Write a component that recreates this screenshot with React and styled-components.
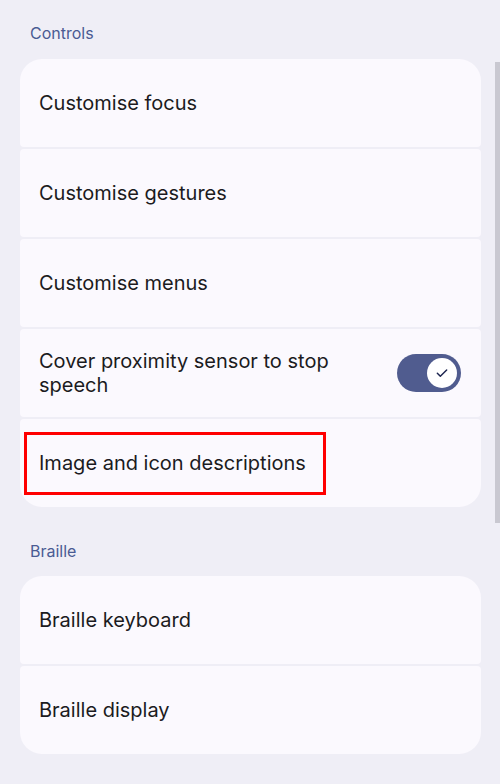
import React from "react";
import styled, { createGlobalStyle } from "styled-components";

const Global = createGlobalStyle`
  html, body { margin: 0; padding: 0; background: #efeef6; }
  body { font-family: "Inter", "Noto Sans", sans-serif; -webkit-font-smoothing: antialiased; }
`;

const Page = styled.div`
  position: relative;
  width: 500px;
  height: 784px;
  overflow: hidden;
  background: #efeef6;
  padding: 0 19px 0 20px;
  box-sizing: border-box;
`;

const SectionTitle = styled.div`
  height: ${(p) => p.$h}px;
  display: flex;
  align-items: flex-end;
  padding: 0 0 ${(p) => p.$pb}px 10px;
  box-sizing: border-box;
  color: #4a5b93;
  font-size: 16px;
  line-height: 20px;
`;

const Group = styled.div`
  display: flex;
  flex-direction: column;
  gap: 2px;
`;

const Row = styled.div`
  position: relative;
  height: 88px;
  background: #fbf9fe;
  border-radius: 4px;
  display: flex;
  align-items: center;
  justify-content: space-between;
  padding: 0 20px 0 19px;
  box-sizing: border-box;
  &:first-child { border-top-left-radius: 22px; border-top-right-radius: 22px; }
  &:last-child { border-bottom-left-radius: 22px; border-bottom-right-radius: 22px; }
`;

const Label = styled.div`
  color: #1b1b21;
  font-size: 20px;
  line-height: 24px;
  max-width: 345px;
`;

const Switch = styled.div`
  width: 64px;
  height: 38px;
  border-radius: 19px;
  background: #505c8f;
  display: flex;
  align-items: center;
  justify-content: flex-end;
  padding: 0 4px;
  box-sizing: border-box;
`;

const Thumb = styled.div`
  width: 30px;
  height: 30px;
  border-radius: 50%;
  background: #ffffff;
  display: flex;
  align-items: center;
  justify-content: center;
`;

const Highlight = styled.div`
  position: absolute;
  left: 4px;
  top: 13px;
  width: 302px;
  height: 63px;
  border: 3px solid #ff0000;
  box-sizing: border-box;
  pointer-events: none;
`;

const ScrollBar = styled.div`
  position: absolute;
  right: 0;
  top: 62px;
  width: 5px;
  height: 461px;
  background: #c9c8d1;
`;

export default function App() {
  return (
    <Page>
      <Global />
      <SectionTitle $h={59} $pb={16}>Controls</SectionTitle>
      <Group>
        <Row><Label>Customise focus</Label></Row>
        <Row><Label>Customise gestures</Label></Row>
        <Row><Label>Customise menus</Label></Row>
        <Row>
          <Label>Cover proximity sensor to stop speech</Label>
          <Switch>
            <Thumb>
              <svg width="16" height="16" viewBox="0 0 24 24" fill="none">
                <path d="M5 12.5l4.5 4.5L19 7.5" stroke="#1d2550" strokeWidth="2.2" strokeLinecap="round" strokeLinejoin="round" />
              </svg>
            </Thumb>
          </Switch>
        </Row>
        <Row>
          <Label>Image and icon descriptions</Label>
          <Highlight />
        </Row>
      </Group>
      <SectionTitle $h={69} $pb={15}>Braille</SectionTitle>
      <Group>
        <Row><Label>Braille keyboard</Label></Row>
        <Row><Label>Braille display</Label></Row>
      </Group>
      <ScrollBar />
    </Page>
  );
}
